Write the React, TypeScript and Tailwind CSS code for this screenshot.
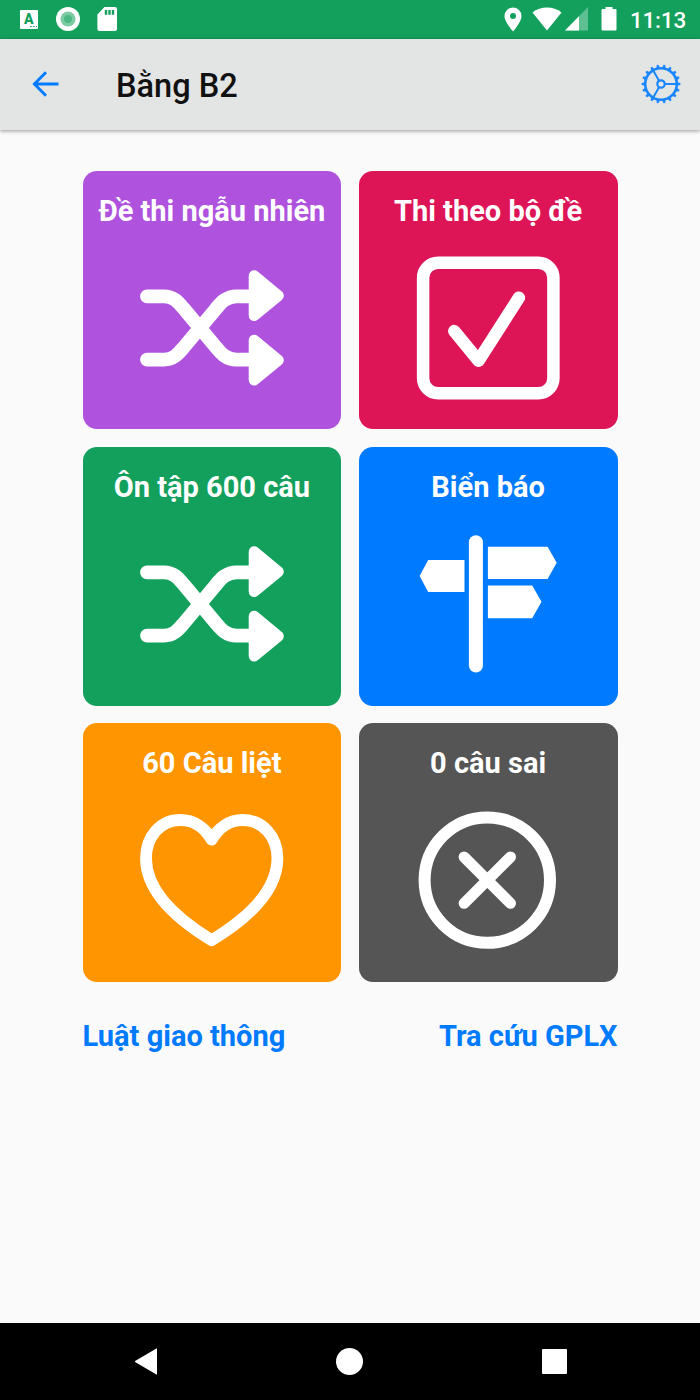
import React from 'react';

interface Tile {
  title: string;
  color: string;
  icon: React.ReactNode;
}

const iconProps = {
  viewBox: '0 0 160 160',
  className: 'h-[160px] w-[160px] flex-shrink-0',
  fill: 'none',
  stroke: 'white',
  strokeLinecap: 'round' as const,
  strokeLinejoin: 'round' as const,
};

function ShuffleIcon() {
  return (
    <svg {...iconProps}>
      <path strokeWidth={13.8} d="M15 47.3H32C42 47.3 47 54 51.5 59.3L83.5 97.6C88 103 93.5 110.6 104.5 110.6H120" />
      <path strokeWidth={13.8} d="M15 110.6H32C42 110.6 47 103.9 51.5 98.6L83.5 60.3C88 55 93.5 47.3 104.5 47.3H120" />
      <path strokeWidth={11} fill="white" d="M122.2 26.8V66.5L146.3 46.8Z" />
      <path strokeWidth={11} fill="white" d="M122.2 91.3V131L146.3 111.2Z" />
    </svg>
  );
}

function CheckIcon() {
  return (
    <svg {...iconProps}>
      <rect x="15.1" y="13.7" width="130.3" height="130.6" rx="15" strokeWidth={12.5} />
      <path strokeWidth={12.5} d="M46.3 82.1L70.6 111.7L110.9 48.7" />
    </svg>
  );
}

function SignIcon() {
  return (
    <svg {...iconProps} fill="white" stroke="none">
      <rect x="60.9" y="10.3" width="14" height="137.2" rx="7" />
      <path d="M56.5 35H20.2L11.6 51L20.2 67H56.5Z" />
      <path d="M79.9 21.7H139.6L148.7 37.7L139.6 54H79.9Z" />
      <path d="M79.9 60.5H124.2L133.5 76.8L124.2 93.3H79.9Z" />
    </svg>
  );
}

function HeartIcon() {
  return (
    <svg {...iconProps}>
      <path
        strokeWidth={11.8}
        d="M79.6 38.7C73 27 62 19 48.5 19C28 19 14 36 14 57.3C14 92 48 120 79.6 139.2C111.4 120 145.4 92 145.4 57.3C145.4 36 131 19 110.7 19C97.4 19 86.4 27 79.6 38.7Z"
      />
    </svg>
  );
}

function WrongIcon() {
  return (
    <svg {...iconProps}>
      <circle cx="79.3" cy="79.1" r="62.7" strokeWidth={12} />
      <path strokeWidth={11} d="M56.1 56L102.5 102.3M102.5 56L56.1 102.3" />
    </svg>
  );
}

const teeth = Array.from({ length: 18 }, (_, i) => i * 20);

function GearIcon() {
  return (
    <svg viewBox="-20 -20 40 40" className="h-10 w-10" fill="none" stroke="#1a86ff" strokeWidth={2}>
      <circle r="15.8" strokeWidth={2.6} />
      <circle r="3.7" strokeWidth={2.2} />
      <path d="M3.6 0H15.7M-1.8 -3.1L-7.8 -13.6M-1.8 3.1L-7.8 13.6" />
      {teeth.map((angle) => (
        <path key={angle} transform={`rotate(${angle})`} d="M16 -1.8L19.4 -.9V.9L16 1.8Z" fill="#1a86ff" stroke="none" />
      ))}
    </svg>
  );
}

const tiles: Tile[] = [
  { title: 'Đề thi ngẫu nhiên', color: 'bg-[#af52de]', icon: <ShuffleIcon /> },
  { title: 'Thi theo bộ đề', color: 'bg-[#dd1455]', icon: <CheckIcon /> },
  { title: 'Ôn tập 600 câu', color: 'bg-[#12a05c]', icon: <ShuffleIcon /> },
  { title: 'Biển báo', color: 'bg-[#007aff]', icon: <SignIcon /> },
  { title: '60 Câu liệt', color: 'bg-[#ff9500]', icon: <HeartIcon /> },
  { title: '0 câu sai', color: 'bg-[#555555]', icon: <WrongIcon /> },
];

function StatusBar() {
  return (
    <div className="flex h-[38.5px] flex-shrink-0 items-center justify-between bg-[#12a05c] pr-[14px] pl-5 text-white">
      <div className="flex items-center">
        {/* keyboard */}
        <svg viewBox="0 0 18 19" className="h-[19px] w-[18px]">
          <rect width="18" height="19" rx="1" fill="white" />
          <text x="8.8" y="13.6" textAnchor="middle" fontSize="14" fontWeight="900" fontFamily="Roboto" fill="#12a05c">A</text>
          <path d="M10 16.5h1.6M13 16.5h1.6M16 16.5h1" stroke="#12a05c" strokeWidth="1.2" />
        </svg>
        <svg viewBox="0 0 24 24" className="ml-[18px] h-6 w-6">
          <circle cx="12" cy="12" r="12" fill="white" />
          <circle cx="12" cy="12" r="7.5" fill="#7dcba4" />
          <circle cx="12" cy="12" r="4" fill="#4db884" />
        </svg>
        {/* sd card */}
        <svg viewBox="0 0 20 24" className="ml-[17px] h-6 w-5">
          <path fill="white" d="M7.5 0H18a2 2 0 0 1 2 2V22a2 2 0 0 1-2 2H2.4a2 2 0 0 1-2-2V7.5Z" />
          <path d="M9 3v4.8M12.5 3v4.8M16 3v4.8" stroke="#12a05c" strokeWidth="2.4" />
        </svg>
      </div>
      <div className="flex items-center">
        <svg viewBox="0 0 18 25" className="h-[25px] w-[18px]">
          <path fill="white" fillRule="evenodd" d="M9 .5A8.5 8.5 0 0 0 .5 9C.5 15 9 24.5 9 24.5S17.5 15 17.5 9A8.5 8.5 0 0 0 9 .5ZM9 5.9a3 3 0 1 1 0 6 3 3 0 0 1 0-6Z" />
        </svg>
        <svg viewBox="0 0 30 24" className="ml-[10px] h-6 w-[30px]">
          <path fill="white" d="M15 23.5L.5 5.5C8.5-1.2 21.5-1.2 29.5 5.5Z" />
        </svg>
        <svg viewBox="0 0 23 24" className="ml-[3px] h-6 w-[23px]">
          <path fill="#5ebf92" d="M23 0V23.5H0Z" />
          <path fill="white" d="M14 9.2V23.5H0Z" />
        </svg>
        <svg viewBox="0 0 16 24" className="ml-[13px] h-6 w-4">
          <path fill="white" d="M4.5 0h7v2H14.5a1 1 0 0 1 1 1V22.5a1 1 0 0 1-1 1H1.5a1 1 0 0 1-1-1V3a1 1 0 0 1 1-1h3Z" />
        </svg>
        <span className="ml-[13px] pt-0.5 text-[22.5px] leading-none font-medium tracking-[-0.2px]">11:13</span>
      </div>
    </div>
  );
}

function Header() {
  return (
    <header className="flex h-[91px] flex-shrink-0 items-center bg-[#e3e5e4] pr-[19px] pl-8 shadow-[0_1px_4px_rgba(0,0,0,0.4)]">
      <svg viewBox="0 0 27 26" className="h-[26px] w-[27px]" fill="none" stroke="#007aff" strokeWidth={2.9}>
        <path d="M26.5 13H3M14 1.3L2.4 13L14 24.7" />
      </svg>
      <h1 className="ml-[57px] flex-1 pt-[5px] text-[32.5px] leading-none font-medium text-[#111]">Bằng B2</h1>
      <GearIcon />
    </header>
  );
}

export default function App() {
  return (
    <div className="flex h-[1400px] w-[700px] flex-col overflow-hidden bg-[#fafafa] font-['Roboto',sans-serif]">
      <StatusBar />
      <Header />

      <main className="flex-1 px-[82.5px] pt-[41px]">
        <div className="grid grid-cols-2 gap-[17.5px]">
          {tiles.map((tile) => (
            <div key={tile.title} className={`flex h-[258.75px] flex-col items-center rounded-[14px] pt-[22px] ${tile.color}`}>
              <h2 className="mb-[20px] text-[29px] leading-9 font-bold whitespace-nowrap text-white">{tile.title}</h2>
              {tile.icon}
            </div>
          ))}
        </div>

        <div className="mt-[36px] flex justify-between text-[29px] leading-9 font-bold text-[#007aff]">
          <a>Luật giao thông</a>
          <a>Tra cứu GPLX</a>
        </div>
      </main>

      <nav className="flex h-[77.5px] flex-shrink-0 items-center justify-between bg-black pr-[133px] pl-[133px]">
        <svg viewBox="0 0 24 27" className="h-[27px] w-6">
          <path d="M23.5 1.5V25.5L3 13.5Z" fill="white" stroke="white" strokeWidth="2" strokeLinejoin="round" />
        </svg>
        <div className="h-[27px] w-[27px] rounded-full bg-white" />
        <div className="h-[25px] w-[25px] rounded-[1px] bg-white" />
      </nav>
    </div>
  );
}
